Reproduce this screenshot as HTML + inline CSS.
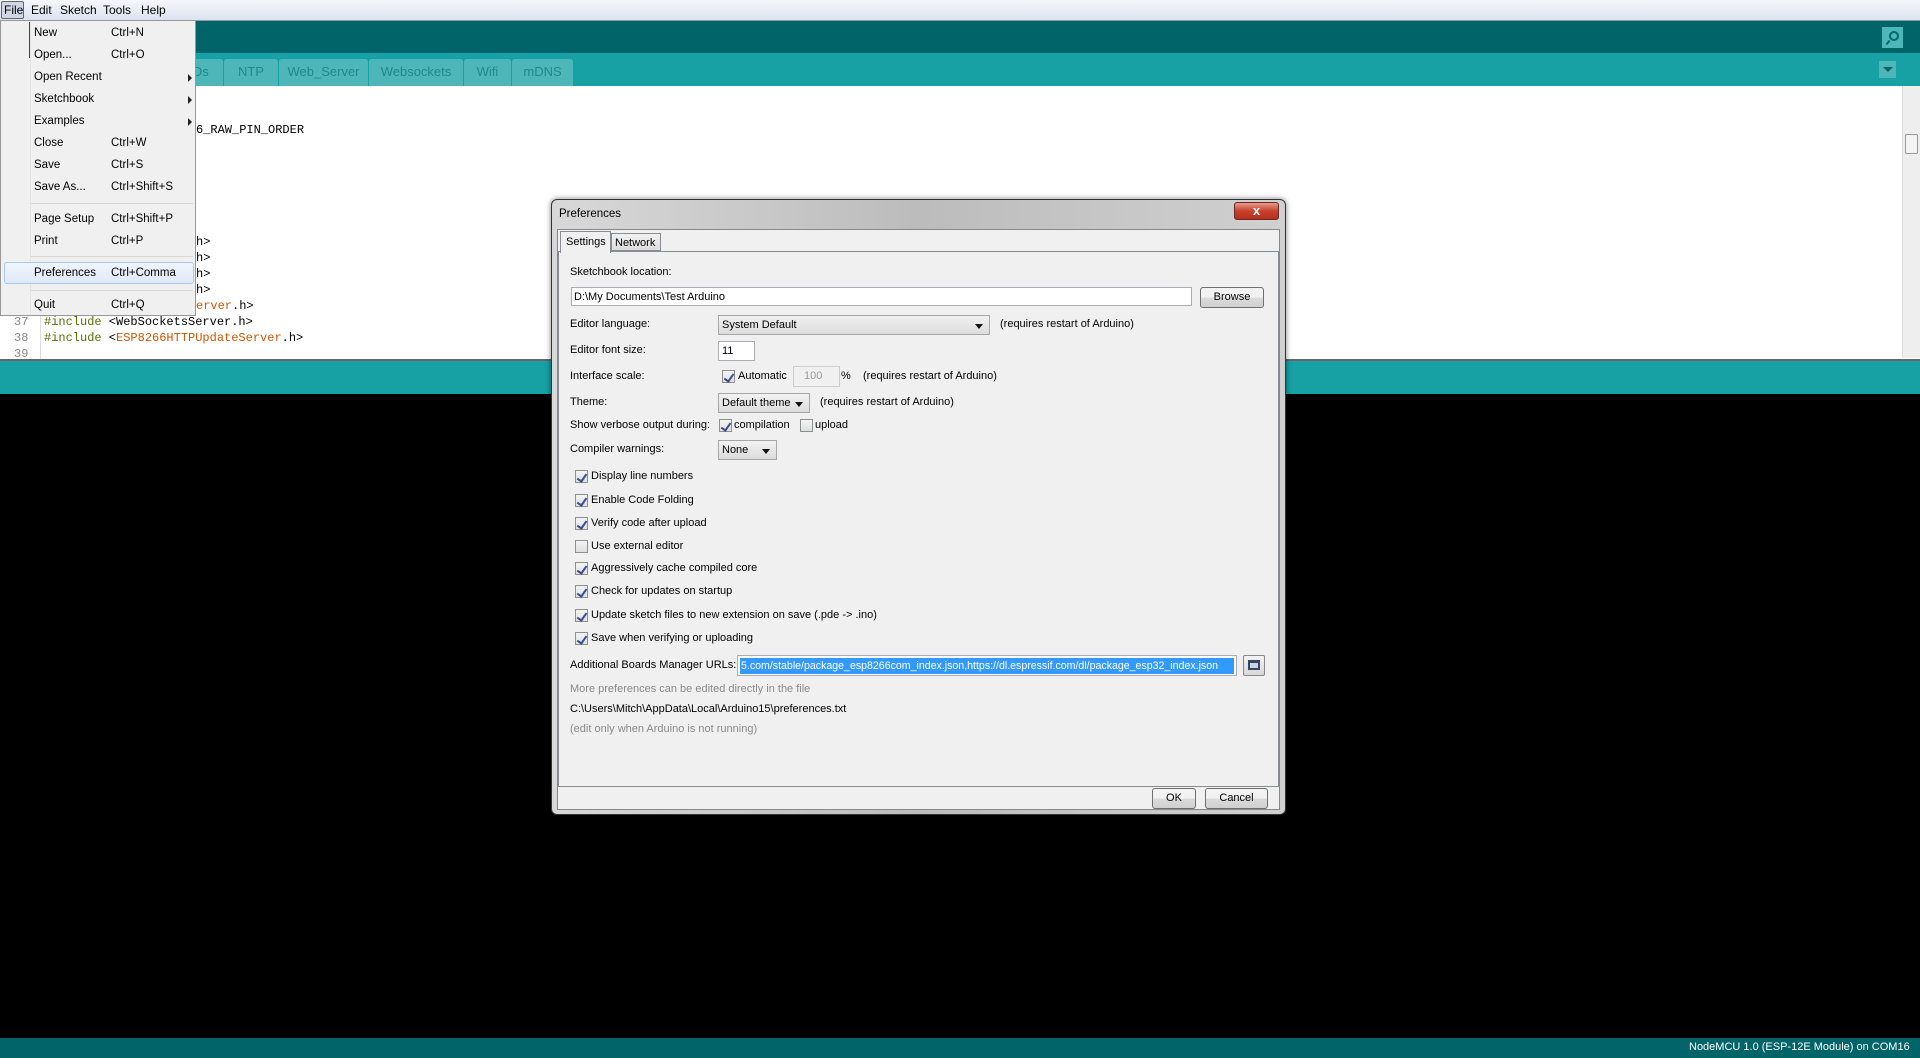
<!DOCTYPE html>
<html><head><meta charset="utf-8">
<style>
*{margin:0;padding:0;box-sizing:border-box}
body{width:1920px;height:1058px;overflow:hidden;position:relative;font-family:"Liberation Sans",sans-serif;font-size:11px;color:#000;background:#000}
.a{position:absolute;white-space:nowrap}
.mono{font-family:"Liberation Mono",monospace;font-size:12px}
.cb{position:absolute;width:13px;height:13px;border:1px solid #8e8f8f;background:linear-gradient(#f4f4f4,#e0e0e0)}
.cb.on::after{content:"";position:absolute;left:3px;top:1px;width:4px;height:8px;border:solid #3a4f8f;border-width:0 2px 2px 0;transform:rotate(35deg)}
.sel{position:absolute;border:1px solid #a7a7a7;background:linear-gradient(#f2f2f2,#dcdcdc);padding:3px 3px;font-size:11px}
.sel::after{content:"";position:absolute;right:6px;top:8px;border:4px solid transparent;border-top:5px solid #111}
.btn{position:absolute;border:1px solid #707070;border-radius:3px;background:linear-gradient(#f2f2f2 50%,#dcdcdc 50%,#cfcfcf);text-align:center;font-size:11px;line-height:19px}
.tab{position:absolute;top:59px;height:27px;background:#4db6b9;color:#1d8a8e;font-size:13px;line-height:26px;text-align:center;border-radius:3px 3px 0 0}
.m{font-size:11.5px}
</style></head><body>
<!-- menubar -->
<div class="a" style="left:0;top:0;width:1920px;height:20px;background:linear-gradient(#f6f7fb,#dbe2f0)"></div>
<div class="a" style="left:1px;top:1px;width:23px;height:18px;border:1px solid #666;border-radius:2px;background:#cfd6e6"></div>
<div class="a" style="left:4px;top:3px;font-size:12px">File</div>
<div class="a" style="left:31px;top:3px;font-size:12px">Edit</div>
<div class="a" style="left:60px;top:3px;font-size:12px">Sketch</div>
<div class="a" style="left:103px;top:3px;font-size:12px">Tools</div>
<div class="a" style="left:141px;top:3px;font-size:12px">Help</div>
<!-- toolbar -->
<div class="a" style="left:0;top:20px;width:1920px;height:33px;background:#006468;border-top:1px solid #8a9a9a"></div>
<div class="a" style="left:1882px;top:27px;width:21px;height:21px;background:#4db6b9"></div>
<div class="a" style="left:1889px;top:31px;width:10px;height:10px;border:2px solid #006468;border-radius:50%"></div>
<div class="a" style="left:1887px;top:40px;width:2px;height:5px;background:#006468;transform:rotate(40deg)"></div>
<!-- tabs row -->
<div class="a" style="left:0;top:53px;width:1920px;height:33px;background:#17a1a5"></div>
<div class="tab" style="left:170px;width:53px">EDs</div>
<div class="tab" style="left:224px;width:54px">NTP</div>
<div class="tab" style="left:279px;width:89px">Web_Server</div>
<div class="tab" style="left:369px;width:94px">Websockets</div>
<div class="tab" style="left:464px;width:47px">Wifi</div>
<div class="tab" style="left:512px;width:61px">mDNS</div>
<div class="a" style="left:1879px;top:61px;width:17px;height:17px;background:#4db6b9"></div>
<div class="a" style="left:1883px;top:67px;border:5px solid transparent;border-top:5px solid #006468"></div>
<!-- editor -->
<div class="a" style="left:0;top:86px;width:1920px;height:275px;background:#fff"></div>
<div class="a" style="left:40px;top:86px;width:1px;height:275px;background:#ddd"></div>
<div class="a" style="left:1902px;top:86px;width:18px;height:272px;background:#eee;border-left:1px solid #ddd"></div>
<div class="a" style="left:1905px;top:134px;width:13px;height:20px;border:1px solid #999;border-radius:2px;background:#f4f4f4"></div>
<div class="a mono" style="left:196px;top:123px">6_RAW_PIN_ORDER</div>
<div class="a mono" style="left:196px;top:235px">h&gt;</div>
<div class="a mono" style="left:196px;top:251px">h&gt;</div>
<div class="a mono" style="left:196px;top:267px">h&gt;</div>
<div class="a mono" style="left:196px;top:283px">h&gt;</div>
<div class="a mono" style="left:196px;top:299px"><span style="color:#d35400">erver</span>.h&gt;</div>
<div class="a mono" style="left:14px;top:315px;color:#888">37</div>
<div class="a mono" style="left:44px;top:315px"><span style="color:#5e6d03">#include</span> &lt;WebSocketsServer.h&gt;</div>
<div class="a mono" style="left:14px;top:331px;color:#888">38</div>
<div class="a mono" style="left:44px;top:331px"><span style="color:#5e6d03">#include</span> &lt;<span style="color:#d35400">ESP8266HTTPUpdateServer</span>.h&gt;</div>
<div class="a mono" style="left:14px;top:347px;color:#888">39</div>
<!-- status -->
<div class="a" style="left:0;top:359px;width:1920px;height:2px;background:#666"></div>
<div class="a" style="left:0;top:361px;width:1920px;height:33px;background:#17a1a5"></div>
<div class="a" style="left:0;top:1038px;width:1920px;height:20px;background:#006468"></div>
<div class="a" style="left:1689px;top:1041px;color:#fff;font-size:11px">NodeMCU 1.0 (ESP-12E Module) on COM16</div>
<!-- file menu -->
<div class="a" style="left:0;top:20px;width:196px;height:296px;background:#f0f0f0;border:1px solid #979797"></div>
<div class="a" style="left:30px;top:21px;width:1px;height:294px;background:#e2e3e3"></div>
<div class="a" style="left:29px;top:22px;width:1px;height:36px;background:#006468"></div>
<div class="a" style="left:31px;top:203px;width:162px;height:1px;background:#d7d7d7"></div>
<div class="a" style="left:31px;top:256px;width:162px;height:1px;background:#d7d7d7"></div>
<div class="a" style="left:31px;top:290px;width:162px;height:1px;background:#d7d7d7"></div>
<div class="a" style="left:4px;top:262px;width:190px;height:22px;border:1px solid #a8c8ec;border-radius:3px;background:linear-gradient(#f0f5fc,#dfe9f7)"></div>
<div class="a m" style="left:34px;top:27px">New</div><div class="a m" style="left:111px;top:27px">Ctrl+N</div>
<div class="a m" style="left:34px;top:49px">Open...</div><div class="a m" style="left:111px;top:49px">Ctrl+O</div>
<div class="a m" style="left:34px;top:71px">Open Recent</div>
<div class="a m" style="left:34px;top:93px">Sketchbook</div>
<div class="a m" style="left:34px;top:115px">Examples</div>
<div class="a" style="left:188px;top:74px;border:4px solid transparent;border-left:4px solid #222"></div>
<div class="a" style="left:188px;top:96px;border:4px solid transparent;border-left:4px solid #222"></div>
<div class="a" style="left:188px;top:118px;border:4px solid transparent;border-left:4px solid #222"></div>
<div class="a m" style="left:34px;top:137px">Close</div><div class="a m" style="left:111px;top:137px">Ctrl+W</div>
<div class="a m" style="left:34px;top:159px">Save</div><div class="a m" style="left:111px;top:159px">Ctrl+S</div>
<div class="a m" style="left:34px;top:181px">Save As...</div><div class="a m" style="left:111px;top:181px">Ctrl+Shift+S</div>
<div class="a m" style="left:34px;top:213px">Page Setup</div><div class="a m" style="left:111px;top:213px">Ctrl+Shift+P</div>
<div class="a m" style="left:34px;top:235px">Print</div><div class="a m" style="left:111px;top:235px">Ctrl+P</div>
<div class="a m" style="left:34px;top:267px">Preferences</div><div class="a m" style="left:111px;top:267px">Ctrl+Comma</div>
<div class="a m" style="left:34px;top:299px">Quit</div><div class="a m" style="left:111px;top:299px">Ctrl+Q</div>
<!-- dialog -->
<div class="a" style="left:551px;top:199px;width:735px;height:616px;border:1px solid #333;border-radius:6px;background:linear-gradient(90deg,#d8d8d8,#bcbcbc 50%,#d0d0d0);box-shadow:0 0 6px rgba(0,0,0,.5)"></div>
<div class="a" style="left:559px;top:208px;font-size:11.5px">Preferences</div>
<div class="a" style="left:1234px;top:202px;width:45px;height:18px;border:1px solid #6b2a22;border-radius:3px;background:linear-gradient(#e89a8a,#c7432e 50%,#b52e1a);color:#fff;font-weight:bold;text-align:center;line-height:16px;font-size:13px">x</div>
<div class="a" style="left:557px;top:229px;width:723px;height:581px;background:#f0f0f0;border:1px solid #888"></div>
<div class="a" style="left:558px;top:251px;width:721px;height:536px;border:1px solid #898c95;background:#f0f0f0"></div>
<div class="a" style="left:560px;top:231px;width:51px;height:22px;border:1px solid #898c95;border-bottom:none;background:#f0f0f0"></div>
<div class="a" style="left:566px;top:236px">Settings</div>
<div class="a" style="left:611px;top:233px;width:50px;height:18px;border:1px solid #898c95;background:linear-gradient(#f2f2f2,#dcdcdc)"></div>
<div class="a" style="left:615px;top:237px">Network</div>
<div class="a" style="left:570px;top:266px">Sketchbook location:</div>
<div class="a" style="left:571px;top:287px;width:621px;height:19px;border:1px solid #abadb3;background:#fff;padding:2px 2px;line-height:14px">D:\My Documents\Test Arduino</div>
<div class="btn" style="left:1200px;top:287px;width:64px;height:21px">Browse</div>
<div class="a" style="left:570px;top:318px">Editor language:</div>
<div class="sel" style="left:718px;top:315px;width:272px;height:20px">System Default</div>
<div class="a" style="left:1000px;top:318px">(requires restart of Arduino)</div>
<div class="a" style="left:570px;top:344px">Editor font size:</div>
<div class="a" style="left:718px;top:341px;width:37px;height:20px;border:1px solid #abadb3;background:#fff;padding:3px 3px">11</div>
<div class="a" style="left:570px;top:370px">Interface scale:</div>
<div class="cb on" style="left:722px;top:370px"></div>
<div class="a" style="left:738px;top:370px">Automatic</div>
<div class="a" style="left:793px;top:366px;width:47px;height:21px;border:1px solid #ccc;background:#f0f0f0;color:#999;padding:3px 10px">100</div>
<div class="a" style="left:841px;top:370px">%</div>
<div class="a" style="left:863px;top:370px">(requires restart of Arduino)</div>
<div class="a" style="left:570px;top:396px">Theme:</div>
<div class="sel" style="left:718px;top:393px;width:92px;height:20px">Default theme</div>
<div class="a" style="left:820px;top:396px">(requires restart of Arduino)</div>
<div class="a" style="left:570px;top:419px">Show verbose output during:</div>
<div class="cb on" style="left:719px;top:419px"></div>
<div class="a" style="left:734px;top:419px">compilation</div>
<div class="cb" style="left:800px;top:419px"></div>
<div class="a" style="left:815px;top:419px">upload</div>
<div class="a" style="left:570px;top:443px">Compiler warnings:</div>
<div class="sel" style="left:718px;top:440px;width:59px;height:20px">None</div>
<div class="cb on" style="left:575px;top:470px"></div><div class="a" style="left:591px;top:470px">Display line numbers</div>
<div class="cb on" style="left:575px;top:494px"></div><div class="a" style="left:591px;top:494px">Enable Code Folding</div>
<div class="cb on" style="left:575px;top:517px"></div><div class="a" style="left:591px;top:517px">Verify code after upload</div>
<div class="cb" style="left:575px;top:540px"></div><div class="a" style="left:591px;top:540px">Use external editor</div>
<div class="cb on" style="left:575px;top:562px"></div><div class="a" style="left:591px;top:562px">Aggressively cache compiled core</div>
<div class="cb on" style="left:575px;top:585px"></div><div class="a" style="left:591px;top:585px">Check for updates on startup</div>
<div class="cb on" style="left:575px;top:609px"></div><div class="a" style="left:591px;top:609px">Update sketch files to new extension on save (.pde -&gt; .ino)</div>
<div class="cb on" style="left:575px;top:632px"></div><div class="a" style="left:591px;top:632px">Save when verifying or uploading</div>
<div class="a" style="left:570px;top:659px">Additional Boards Manager URLs:</div>
<div class="a" style="left:737px;top:655px;width:500px;height:21px;border:1px solid #abadb3;background:#fff;overflow:hidden;padding:2px 2px"><span style="background:#3399ff;color:#fff;display:block;padding:1px 1px;line-height:14px;overflow:hidden;font-size:10.6px">5.com/stable/package_esp8266com_index.json,https://dl.espressif.com/dl/package_esp32_index.json</span></div>
<div class="a" style="left:1243px;top:655px;width:22px;height:21px;border:1px solid #888;border-radius:2px;background:linear-gradient(#f4f4f4,#d8d8d8)"></div>
<div class="a" style="left:1248px;top:660px;width:12px;height:10px;border:2px solid #3a4660;border-top-width:3px;background:#c8d4e8"></div>
<div class="a" style="left:570px;top:683px;color:#8a8a8a">More preferences can be edited directly in the file</div>
<div class="a" style="left:570px;top:703px">C:\Users\Mitch\AppData\Local\Arduino15\preferences.txt</div>
<div class="a" style="left:570px;top:723px;color:#8a8a8a">(edit only when Arduino is not running)</div>
<div class="btn" style="left:1152px;top:788px;width:44px;height:21px">OK</div>
<div class="btn" style="left:1205px;top:788px;width:63px;height:21px">Cancel</div>
</body></html>
